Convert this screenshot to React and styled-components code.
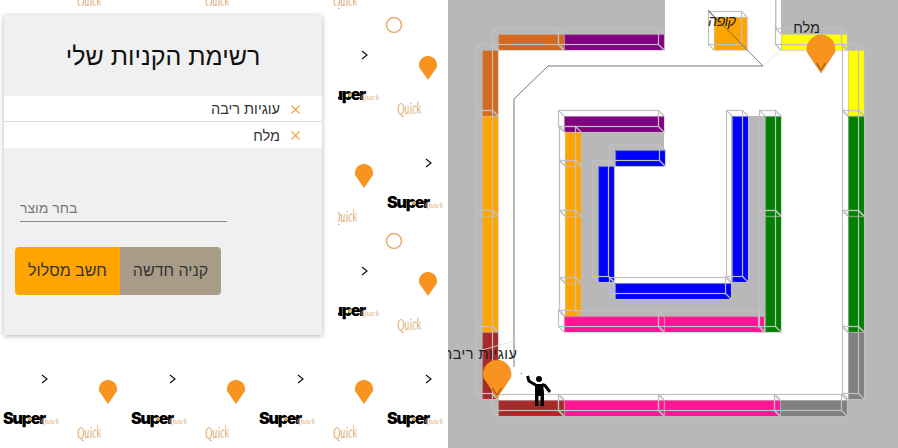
import React from 'react';
import styled, { createGlobalStyle } from 'styled-components';

const GlobalStyle = createGlobalStyle`
  html, body {
    margin: 0;
    padding: 0;
    background: #fff;
    font-family: "Liberation Sans", Arial, sans-serif;
  }
`;

const Page = styled.div`
  display: grid;
  grid-template-columns: 448px 450px;
  width: 898px;
  height: 448px;
  overflow: hidden;
`;

const LeftSide = styled.div`
  position: relative;
  height: 448px;
  overflow: hidden;
`;

const WallpaperSvg = styled.svg`
  position: absolute;
  left: 0;
  top: 0;
`;

const SuperText = styled.text`
  font-family: Inter, sans-serif;
  font-weight: 900;
  font-size: 16px;
  letter-spacing: -1.2px;
  fill: #000;
`;

const SmallQuick = styled.text`
  font-family: "Liberation Serif", serif;
  font-style: italic;
  font-size: 9px;
  fill: #e3b27c;
`;

const BigQuick = styled.text`
  font-family: "Liberation Serif", serif;
  font-style: italic;
  font-size: 17px;
  fill: #dda76c;
`;

const Sidebar = styled.div`
  position: relative;
  width: 338px;
  height: 354px;
  margin-top: 6px;
  padding: 9px 16px 0 4px;
  box-sizing: border-box;
  background: #fff;
`;

const Panel = styled.div`
  width: 318px;
  height: 320px;
  background: #f0f0f0;
  box-shadow: 0 1px 5px rgba(0, 0, 0, 0.3);
  display: flex;
  flex-direction: column;
`;

const Title = styled.h1`
  margin: 0;
  height: 81px;
  padding-top: 1px;
  box-sizing: border-box;
  display: flex;
  align-items: center;
  justify-content: center;
  font-size: 25px;
  font-weight: normal;
  color: #111;
`;

const ItemList = styled.ul`
  list-style: none;
  margin: 0;
  padding: 0;
  background: #fff;
`;

const Item = styled.li`
  height: 26px;
  padding: 1px 22px 0 0;
  box-sizing: border-box;
  display: flex;
  align-items: center;
  gap: 11px;
  font-size: 14.5px;
  color: #333;
  border-bottom: ${({ $last }) => ($last ? 'none' : '1px solid #ddd')};
`;

const RemoveIcon = styled.svg`
  width: 9px;
  height: 9px;
  flex: none;
`;

const Field = styled.div`
  align-self: flex-end;
  margin: 47px 0 0 16px;
  width: 207px;
  height: 26px;
  border-bottom: 1px solid #888;
  display: flex;
  align-items: center;
  justify-content: flex-end;
  font-size: 14px;
  color: #777;
`;

const Buttons = styled.div`
  align-self: flex-end;
  display: flex;
  flex-direction: row-reverse;
  width: 206px;
  height: 48px;
  margin: 25px 0 0 11px;
  border-radius: 4px;
  overflow: hidden;
`;

const Button = styled.button`
  border: none;
  padding: 0;
  width: ${({ $primary }) => ($primary ? '105px' : '101px')};
  font-family: inherit;
  font-size: 16px;
  color: #333;
  background: ${({ $primary }) => ($primary ? '#ffa500' : '#a89c88')};
`;

const MapSvg = styled.svg`
  display: block;
  background: #b8b8b8;
`;

const MapLabel = styled.text`
  font-family: "Liberation Sans", sans-serif;
  font-size: 14.5px;
  fill: #222;
`;

const KioskLabel = styled(MapLabel)`
  font-style: italic;
`;

const CHOCOLATE = '#d2691e';
const PURPLE = '#800080';
const YELLOW = '#ffff00';
const ORANGE = '#ffa500';
const BROWN = '#a52a2a';
const PINK = '#ff1493';
const GREY = '#808080';
const GREEN = '#008000';
const BLUE = '#0000ff';
const WIRE = '#c0c0c0';

// x, y, w, h, colour
const shelves = [
  [498, 34, 66, 16, CHOCOLATE],
  [564, 34, 100, 16, PURPLE],
  [781, 34, 66, 16, YELLOW],
  [482, 50, 16, 66, CHOCOLATE],
  [482, 116, 16, 100, ORANGE],
  [482, 216, 16, 116, ORANGE],
  [482, 332, 16, 67, BROWN],
  [498, 400, 66, 16, BROWN],
  [564, 400, 100, 16, PINK],
  [664, 400, 116, 16, PINK],
  [780, 400, 67, 16, GREY],
  [848, 50, 16, 66, YELLOW],
  [848, 116, 16, 100, GREEN],
  [848, 216, 16, 116, GREEN],
  [848, 332, 16, 67, GREY],
  [564, 116, 100, 16, PURPLE],
  [565, 132, 16, 34, ORANGE],
  [565, 166, 16, 50, ORANGE],
  [565, 216, 16, 67, ORANGE],
  [565, 283, 16, 33, ORANGE],
  [564, 316, 100, 16, PINK],
  [664, 316, 100, 16, PINK],
  [765, 116, 16, 100, GREEN],
  [765, 216, 16, 116, GREEN],
  [615, 150, 50, 16, BLUE],
  [598, 166, 16, 116, BLUE],
  [615, 283, 116, 16, BLUE],
  [732, 116, 16, 166, BLUE],
  [714, 17, 33, 33, ORANGE],
];

const pinPath = (cx, cy, r, tip) =>
  `M${cx - r * 0.97} ${cy + r * 0.25} A${r} ${r} 0 1 1 ${cx + r * 0.97} ${cy + r * 0.25} L${cx} ${tip} Z`;

const Wallpaper = () => {
  const tiles = [];
  for (let k = -1; k <= 3; k++) {
    const py = 67 + 108 * k;
    const start = k % 2 === 0 ? 43 : -21;
    for (let px = start; px < 600; px += 128) {
      tiles.push(
        <g key={`${k}-${px}`}>
          <path d={pinPath(px + 1, py - 2, 9, py + 13)} fill="#f7931e" />
          <circle cx={px - 33} cy={py - 42} r="7.5" fill="none" stroke="#e8ab69" strokeWidth="1.5" />
          <polyline points={`${px - 65},${py - 16} ${px - 60},${py - 12} ${px - 65},${py - 8}`} fill="none" stroke="#111" strokeWidth="1.2" />
          <SuperText x={px - 104} y={py + 33}>Super</SuperText>
          <circle cx={px - 77} cy={py + 28} r="2" fill="#e8ab69" />
          <SmallQuick x={px - 66} y={py + 33} textLength="18" lengthAdjust="spacingAndGlyphs">Quick</SmallQuick>
          <BigQuick x={px - 30} y={py + 47} textLength="24" lengthAdjust="spacingAndGlyphs" transform={`rotate(-4 ${px - 18} ${py + 42})`}>Quick</BigQuick>
        </g>
      );
    }
  }
  return (
    <WallpaperSvg width="448" height="448" viewBox="0 0 448 448">
      {tiles}
    </WallpaperSvg>
  );
};

const Shelf = ({ x, y, w, h, color }) => {
  const b = 6;
  return (
    <g>
      <rect x={x} y={y} width={w} height={h} fill={color} />
      <g fill="none" stroke={WIRE} strokeWidth="1.2">
        <rect x={x - b + 0.5} y={y - b + 0.5} width={w} height={h} />
        <line x1={x - b} y1={y - b} x2={x} y2={y} />
        <line x1={x - b + w} y1={y - b} x2={x + w} y2={y} />
        <line x1={x - b} y1={y - b + h} x2={x} y2={y + h} />
        <line x1={x - b + w} y1={y - b + h} x2={x + w} y2={y + h} />
        <rect x={x + 0.5} y={y + 0.5} width={w} height={h} strokeOpacity="0.6" />
      </g>
    </g>
  );
};

const MapPin = ({ cx, cy, tip }) => (
  <g>
    <path d={pinPath(cx, cy, 14, tip)} fill="#f7931e" stroke="#d9801a" strokeWidth="0.6" />
    <polyline points={`${cx - 4.5},${tip - 10} ${cx},${tip - 3} ${cx + 4.5},${tip - 10}`} fill="none" stroke="#5a3a10" strokeWidth="0.8" />
  </g>
);

const StoreMap = () => (
  <MapSvg width="450" height="448" viewBox="448 0 450 448">
    <rect x="498" y="50" width="350" height="350" fill="#fff" />
    <rect x="665" y="0" width="116" height="50" fill="#fff" />
    <rect x="565" y="116" width="216" height="216" fill="#b8b8b8" />
    <path d="M664 100 H731 V283 H615 V167 H664 Z" fill="#fff" />
    {shelves.map(([x, y, w, h, color]) => (
      <Shelf key={`${x}-${y}`} x={x} y={y} w={w} h={h} color={color} />
    ))}
    <rect x="775" y="0" width="1.5" height="28" fill={WIRE} />
    <KioskLabel x="708" y="26" textLength="28">קופה</KioskLabel>
    <polyline points="763,66 548,66 514,99 514,367" fill="none" stroke="#777" strokeWidth="1" />
    <line x1="708" y1="10" x2="763" y2="66" stroke="#444" strokeWidth="0.7" />
    <line x1="763" y1="66" x2="781" y2="50" stroke="#ddd" strokeWidth="0.8" />
    <line x1="514" y1="341" x2="482" y2="350" stroke="#ddd" strokeWidth="0.8" />
    <circle cx="521.5" cy="373.5" r="0.6" fill="#444" />
    <MapLabel x="820" y="33" textAnchor="end">מלח</MapLabel>
    <MapPin cx={821} cy={49} tip={73} />
    <MapLabel x="517" y="359" textAnchor="end" textLength="74">עוגיות ריבה</MapLabel>
    <MapPin cx={497} cy={374} tip={398} />
    <g fill="#000">
      <circle cx="539" cy="379" r="3" />
      <path d="M535 384 H543 L544 392 V406 H540.5 V396 H538.5 V406 H535 Z" />
    </g>
    <polyline points="527.5,376 529,381 535.5,385" fill="none" stroke="#000" strokeWidth="3" />
    <polyline points="542,384.5 545,385.5 550,392" fill="none" stroke="#000" strokeWidth="3" />
  </MapSvg>
);

const Remove = () => (
  <RemoveIcon viewBox="0 0 9 9">
    <path d="M0.5 0.5 L8.5 8.5 M8.5 0.5 L0.5 8.5" stroke="#f7a13c" strokeWidth="1.1" fill="none" />
  </RemoveIcon>
);

const App = () => (
  <>
    <GlobalStyle />
    <Page>
      <LeftSide>
        <Wallpaper />
        <Sidebar>
          <Panel dir="rtl">
            <Title>רשימת הקניות שלי</Title>
            <ItemList>
              <Item>
                <Remove />
                עוגיות ריבה
              </Item>
              <Item $last>
                <Remove />
                מלח
              </Item>
            </ItemList>
            <Field>בחר מוצר</Field>
            <Buttons dir="ltr">
              <Button>קניה חדשה</Button>
              <Button $primary>חשב מסלול</Button>
            </Buttons>
          </Panel>
        </Sidebar>
      </LeftSide>
      <StoreMap />
    </Page>
  </>
);

export default App;
